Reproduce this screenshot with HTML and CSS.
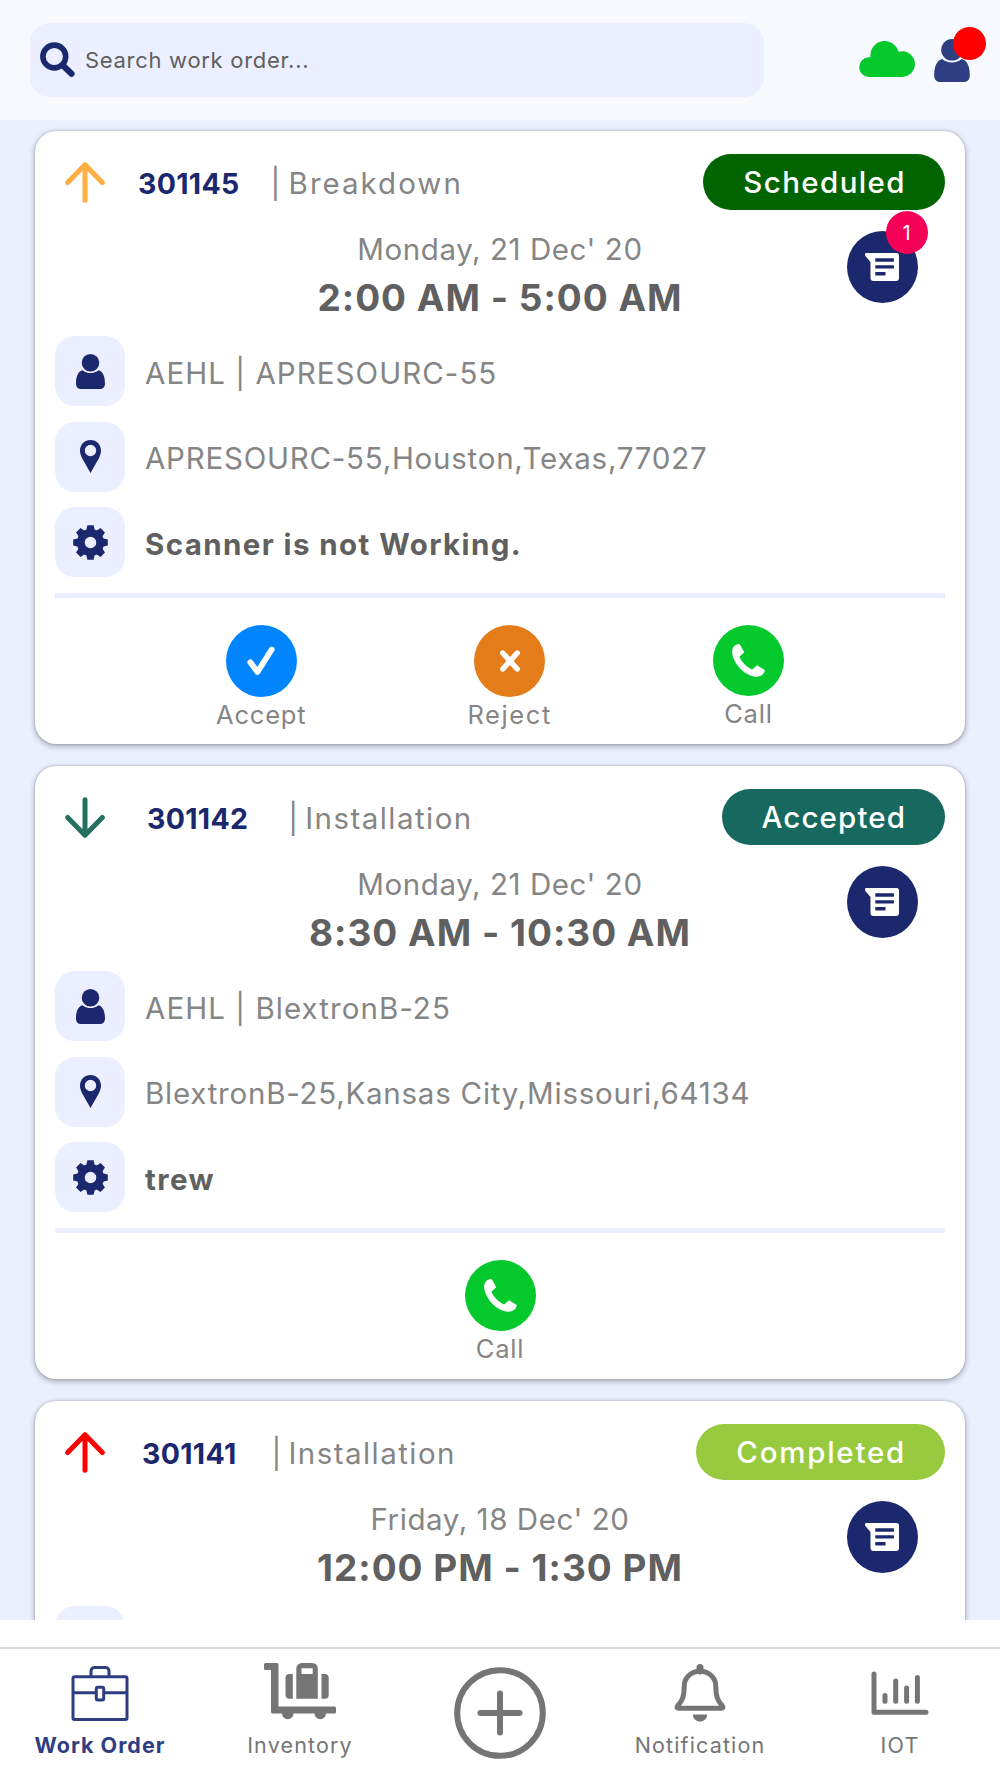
FILE: index.html
```
<!DOCTYPE html>
<html lang="en">
<head>
  <meta charset="UTF-8" />
  <meta name="viewport" content="width=device-width, initial-scale=1.0" />
  <title>Work Orders</title>
  <link rel="stylesheet" href="styles.css">
</head>
<body>

  <!-- Shared icons -->
  <svg class="sprite" aria-hidden="true">
    <symbol id="arrow-up" viewBox="0 0 40 41">
      <path d="M20 38.3V2.8M2.7 20.5L20 2.8l17.3 17.7" fill="none" stroke="currentColor" stroke-width="5" stroke-linecap="round" stroke-linejoin="round" />
    </symbol>
    <symbol id="arrow-down" viewBox="0 0 40 41">
      <path d="M20 2.7v35.5M2.7 20.5L20 38.2l17.3-17.7" fill="none" stroke="currentColor" stroke-width="5" stroke-linecap="round" stroke-linejoin="round" />
    </symbol>
    <symbol id="user" viewBox="0 0 29 35">
      <circle cx="14.5" cy="8.8" r="8.8" />
      <path d="M6.600 16.200C2 17.200 0 22.500 0 29.500C0 32.800 1.800 35 5 35h19c3.200 0 5-2.200 5-5.500c0-7-2-12.300-6.600-13.300c-2 1.800-4.800 2.900-7.900 2.900s-5.900-1.100-7.900-2.900z" />
    </symbol>
    <symbol id="pin" viewBox="0 0 21 33">
      <path fill-rule="evenodd" d="M10.500 0C4.500 0 0 4.600 0 10.600c0 2.800.8 4.900 2.100 7.600L10.500 33l8.400-14.800c1.300-2.700 2.100-4.800 2.100-7.600C21 4.600 16.500 0 10.500 0zm0 4.800a5.700 5.700 0 1 1 0 11.400a5.700 5.700 0 1 1 0-11.400z" />
    </symbol>
    <symbol id="gear" viewBox="-17.500 -17.500 35 35">
      <circle r="9.700" fill="none" stroke="currentColor" stroke-width="7.800" />
      <path id="tooth" d="M-4.300-12l1.200-5.300h6.200l1.200 5.300z" />
      <use href="#tooth" transform="rotate(45)" />
      <use href="#tooth" transform="rotate(90)" />
      <use href="#tooth" transform="rotate(135)" />
      <use href="#tooth" transform="rotate(180)" />
      <use href="#tooth" transform="rotate(225)" />
      <use href="#tooth" transform="rotate(270)" />
      <use href="#tooth" transform="rotate(315)" />
    </symbol>
    <symbol id="message" viewBox="0 0 34 28">
      <path fill-rule="evenodd" d="M1 0h30.500A2.500 2.500 0 0 1 34 2.500v22.500a3 3 0 0 1-3 3H8.500a3 3 0 0 1-3-3V9L.6 3.200C-.4 1.800-.2 0 1 0zM10.300 5.300v3.400h18.600V5.300zm0 6.900v3.400h18.600v-3.400zm0 6.900v3.400h10.200v-3.400z" />
    </symbol>
    <symbol id="phone" viewBox="0 0 33 33">
      <path d="M5.500.3C1.500 1.500-.5 5 .2 9.500C2 20.500 13 32 24 32.700c4.500.1 8.300-2.200 8.800-6.700L25 21.200l-4.800 4.300C15 23.500 9.500 18 7.400 12.800L12.200 8.200L8.300.9C7.700 0 6.500 0 5.500.3z" />
    </symbol>
  </svg>

  <header class="topbar">
    <label class="search">
      <svg width="35" height="36" viewBox="0 0 35 36">
        <circle cx="14.300" cy="14.500" r="11.400" fill="none" stroke="currentColor" stroke-width="5.600" />
        <path d="M23.500 24l8 7.800" stroke="currentColor" stroke-width="6.200" stroke-linecap="round" />
      </svg>
      <span class="search-text">Search work order...</span>
    </label>
    <svg class="cloud" width="56" height="36" viewBox="0 0 56 36">
      <path d="M10 36h33a12.900 12.900 0 1 0-3.500-25.300A14.300 14.300 0 0 0 11.500 16.300H10A9.850 9.850 0 0 0 10 36z" />
    </svg>
    <div class="profile">
      <svg width="36" height="43"><use href="#user" /></svg>
      <span class="profile-dot"></span>
    </div>
  </header>

  <main class="orders">

    <section class="card">
      <div class="card-head gap-sm">
        <svg class="priority medium"><use href="#arrow-up" /></svg>
        <span class="order-id">301145</span>
        <span class="order-type breakdown">| Breakdown</span>
        <span class="status scheduled">Scheduled</span>
      </div>
      <div class="schedule">
        <div class="when">
          <div class="date">Monday, 21 Dec' 20</div>
          <div class="time">2:00 AM - 5:00 AM</div>
        </div>
        <div class="chat">
          <svg width="34" height="28"><use href="#message" /></svg>
          <span class="count">1</span>
        </div>
      </div>
      <div class="info">
        <span class="tile"><svg width="29" height="35"><use href="#user" /></svg></span>
        <span class="code">AEHL | APRESOURC-55</span>
      </div>
      <div class="info">
        <span class="tile"><svg width="21" height="33"><use href="#pin" /></svg></span>
        <span>APRESOURC-55,Houston,Texas,77027</span>
      </div>
      <div class="info">
        <span class="tile"><svg width="35" height="35"><use href="#gear" /></svg></span>
        <span class="problem">Scanner is not Working.</span>
      </div>
      <div class="actions">
        <div class="action">
          <span class="circle accept">
            <svg class="outline" width="28" height="30" viewBox="0 0 28 30"><path d="M3.300 16.300l7.200 9.700L24.700 3.500" stroke="currentColor" stroke-width="5.800" stroke-linecap="round" stroke-linejoin="round" /></svg>
          </span>
          <span>Accept</span>
        </div>
        <div class="action">
          <span class="circle reject">
            <svg class="outline" width="20" height="22" viewBox="0 0 20 22"><path d="M2.800 3l14.400 16M17.200 3L2.800 19" stroke="currentColor" stroke-width="5.400" stroke-linecap="round" /></svg>
          </span>
          <span class="reject-label">Reject</span>
        </div>
        <div class="action">
          <span class="circle call"><svg width="33" height="33"><use href="#phone" /></svg></span>
          <span>Call</span>
        </div>
      </div>
    </section>

    <section class="card">
      <div class="card-head gap-lg">
        <svg class="priority low"><use href="#arrow-down" /></svg>
        <span class="order-id">301142</span>
        <span class="order-type">| Installation</span>
        <span class="status accepted">Accepted</span>
      </div>
      <div class="schedule">
        <div class="when">
          <div class="date">Monday, 21 Dec' 20</div>
          <div class="time">8:30 AM - 10:30 AM</div>
        </div>
        <div class="chat">
          <svg width="34" height="28"><use href="#message" /></svg>
        </div>
      </div>
      <div class="info">
        <span class="tile"><svg width="29" height="35"><use href="#user" /></svg></span>
        <span class="code">AEHL | BlextronB-25</span>
      </div>
      <div class="info">
        <span class="tile"><svg width="21" height="33"><use href="#pin" /></svg></span>
        <span>BlextronB-25,Kansas City,Missouri,64134</span>
      </div>
      <div class="info">
        <span class="tile"><svg width="35" height="35"><use href="#gear" /></svg></span>
        <span class="problem">trew</span>
      </div>
      <div class="actions">
        <div class="action">
          <span class="circle call"><svg width="33" height="33"><use href="#phone" /></svg></span>
          <span>Call</span>
        </div>
      </div>
    </section>

    <section class="card">
      <div class="card-head gap-md">
        <svg class="priority high"><use href="#arrow-up" /></svg>
        <span class="order-id">301141</span>
        <span class="order-type">| Installation</span>
        <span class="status completed">Completed</span>
      </div>
      <div class="schedule">
        <div class="when">
          <div class="date">Friday, 18 Dec' 20</div>
          <div class="time">12:00 PM - 1:30 PM</div>
        </div>
        <div class="chat">
          <svg width="34" height="28"><use href="#message" /></svg>
        </div>
      </div>
      <div class="info">
        <span class="tile"></span>
      </div>
    </section>

  </main>

  <nav class="tabs">
    <a class="tab active">
      <svg class="outline" width="58" height="60" viewBox="0 0 58 60" stroke="currentColor" stroke-width="3">
        <rect x="2" y="13.700" width="54" height="42.800" rx="1.500" />
        <path d="M20 13V8a3.500 3.500 0 0 1 3.500-3.500h11A3.500 3.500 0 0 1 38 8v5M2 29.700h23M33.500 29.700H56" />
        <rect x="25.300" y="24.200" width="7.400" height="12.800" rx="1.500" />
      </svg>
      <span>Work Order</span>
    </a>
    <a class="tab">
      <svg width="72" height="60" viewBox="0 0 72 60">
        <path d="M1.500 0H13a1.500 1.500 0 0 1 1.500 1.500V43.500h56A1.500 1.500 0 0 1 72 45v4a1.500 1.500 0 0 1-1.500 1.500H62A5.300 5.300 0 1 1 50.500 50.500H29.500A5.300 5.300 0 1 1 18 50.500h-9.500A1.500 1.500 0 0 1 7 49V7H1.500A1.500 1.500 0 0 1 0 5.500v-4A1.500 1.500 0 0 1 1.500 0z" />
        <path d="M28.800 11v24.800h-3.300a4 4 0 0 1-4-4V15a4 4 0 0 1 4-4zM57.500 11v24.800h3.200a4 4 0 0 0 4-4V15a4 4 0 0 0-4-4z" />
        <path fill-rule="evenodd" d="M32.300 35.800V5.500A5.500 5.500 0 0 1 37.800 0h10.500a5.500 5.500 0 0 1 5.500 5.500v30.300zM37.500 5.300v5.800h11.200V5.300z" />
      </svg>
      <span>Inventory</span>
    </a>
    <a class="tab add">
      <svg class="outline" width="92" height="92" viewBox="0 0 92 92" stroke="currentColor" stroke-width="6">
        <circle cx="46" cy="46" r="42.800" />
        <path d="M46 26.500v39M26.500 46h39" stroke-linecap="round" />
      </svg>
    </a>
    <a class="tab">
      <svg class="outline" width="52" height="60" viewBox="0 0 52 60">
        <path d="M26 8.200C16.500 8.200 10.200 15 10.200 23.500C10.200 34 8 38 3.600 43c-1 1.300-.6 2.200.6 2.200h43.600c1.200 0 1.600-.9.600-2.200C44 38 41.800 34 41.800 23.500C41.800 15 35.500 8.200 26 8.200z" stroke="currentColor" stroke-width="5" />
        <path d="M26 4.500V8" stroke="currentColor" stroke-width="7" stroke-linecap="round" />
        <path d="M18.700 51.400h14.600a7.300 7.300 0 0 1-14.600 0z" fill="currentColor" />
      </svg>
      <span>Notification</span>
    </a>
    <a class="tab">
      <svg class="outline" width="58" height="60" viewBox="0 0 58 60" stroke="currentColor" stroke-width="5" stroke-linecap="round" stroke-linejoin="round">
        <path d="M3 11v38.200h52" />
        <path d="M14 32.500v5.700M24.700 18v20.200M35.600 25v13.200M46.400 14.500v23.700" />
      </svg>
      <span>IOT</span>
    </a>
  </nav>

</body>
</html>
```
FILE: styles.css
```
* {
  box-sizing: border-box;
}
body {
  margin: 0;
  height: 1778px;
  overflow: hidden;
  display: flex;
  flex-direction: column;
  font-family: Inter, "Open Sans", sans-serif;
  background: #fff;
  color: #858585;
}
svg {
  display: block;
  flex-shrink: 0;
  fill: currentColor;
}
svg.outline {
  fill: none;
}
.sprite {
  position: absolute;
  width: 0;
  height: 0;
}

/* top bar */
.topbar {
  height: 120px;
  flex-shrink: 0;
  display: flex;
  align-items: center;
  padding-left: 30px;
  background: #f6faff;
}
.search {
  width: 734px;
  height: 74px;
  display: flex;
  align-items: center;
  gap: 10px;
  padding-left: 10px;
  border-radius: 20px;
  background: #ecefff;
  color: #1b286d;
}
.search-text {
  font-size: 22px;
  letter-spacing: 0.7px;
  color: #606060;
}
.cloud {
  margin: 0 19px 2px 95px;
  color: #03c92d;
}
.profile {
  position: relative;
  color: #2f3e80;
}
.profile-dot {
  position: absolute;
  top: -12px;
  right: -16px;
  width: 33px;
  height: 33px;
  border-radius: 50%;
  background: #ff0000;
}

/* work order list */
.orders {
  height: 1500px;
  flex-shrink: 0;
  overflow: hidden;
  padding: 11px 35px 0;
  background: #ebeffe;
}
.card {
  height: 613px;
  margin-bottom: 22px;
  padding: 23px 20px 0;
  border-radius: 21px;
  background: #fff;
  box-shadow: 0 2px 6px rgba(0, 0, 0, 0.32), 0 0 2px rgba(0, 0, 0, 0.25);
}
.card-head {
  height: 56px;
  display: flex;
  align-items: center;
  padding-left: 10px;
  font-size: 29.5px;
}
.gap-sm {
  gap: 33px;
}
.gap-md {
  gap: 37px;
}
.gap-lg {
  gap: 42px;
}
.priority {
  width: 40px;
  height: 41px;
}
.priority.low {
  color: #25705f;
}
.priority.medium {
  color: #ffae42;
}
.priority.high {
  color: #ff0000;
}
.order-id {
  padding-top: 3px;
  font-size: 28.5px;
  font-weight: 700;
  letter-spacing: 0.3px;
  color: #1b286d;
}
.order-type {
  margin-left: -2px;
  padding-top: 2px;
  letter-spacing: 1.45px;
  word-spacing: -4px;
}
.order-type.breakdown {
  letter-spacing: 2px;
}
.status {
  height: 56px;
  line-height: 57px;
  margin-left: auto;
  padding: 0 39px 0 40px;
  border-radius: 28px;
  font-weight: 500;
  letter-spacing: 1.4px;
  color: #fff;
}
.scheduled {
  background: #006400;
}
.accepted {
  letter-spacing: 1.1px;
  background: #17695f;
}
.completed {
  letter-spacing: 1.75px;
  background: #97ca3f;
}

.schedule {
  display: grid;
  grid-template-columns: 1fr auto 1fr;
  height: 98px;
  margin: 16px 0 12px;
}
.when {
  grid-column: 2;
  text-align: center;
}
.date {
  font-size: 29.5px;
  line-height: 47px;
  letter-spacing: 0.57px;
}
.time {
  font-size: 37px;
  font-weight: 700;
  line-height: 49px;
  letter-spacing: 1px;
  color: #606060;
}
.chat {
  position: relative;
  justify-self: end;
  display: flex;
  align-items: center;
  justify-content: center;
  width: 71px;
  height: 72px;
  margin: 4.5px 27.500px 0 0;
  border-radius: 50%;
  background: #1b286d;
  color: #fff;
}
.count {
  position: absolute;
  top: -20px;
  right: -10px;
  width: 42px;
  height: 43px;
  line-height: 44px;
  border-radius: 50%;
  background: #f50057;
  font-size: 20px;
  text-align: center;
}

.info {
  height: 70px;
  margin-bottom: 15.5px;
  display: flex;
  align-items: center;
  gap: 20px;
  font-size: 29.5px;
  line-height: 1;
  letter-spacing: 0.76px;
}
.info span + span {
  padding-top: 5px;
}
.info .code {
  letter-spacing: 1.05px;
}
.info .problem {
  font-weight: 700;
  letter-spacing: 1.4px;
  color: #606060;
}
.tile {
  width: 70px;
  height: 70px;
  flex-shrink: 0;
  display: flex;
  align-items: center;
  justify-content: center;
  border-radius: 20px;
  background: #ecefff;
  color: #1b286d;
}

.actions {
  display: flex;
  justify-content: space-evenly;
  padding-top: 27.5px;
  border-top: 5px solid #ecefff;
}
.action {
  display: flex;
  flex-direction: column;
  align-items: center;
  gap: 3px;
  font-size: 25.5px;
  line-height: 30px;
  letter-spacing: 0.8px;
}
.reject-label {
  letter-spacing: 1.6px;
}
.circle {
  width: 71px;
  height: 72px;
  display: flex;
  align-items: center;
  justify-content: center;
  border-radius: 50%;
  color: #fff;
}
.accept {
  background: #0085ff;
}
.reject {
  background: #e57c1a;
}
.call {
  height: 71px;
  background: #03c92d;
}

/* bottom tabs */
.tabs {
  display: flex;
  height: 131px;
  flex-shrink: 0;
  margin-top: 27px;
  padding-top: 14px;
  border-top: 2px solid #d9d9d9;
}
.tab {
  flex: 1;
  display: flex;
  flex-direction: column;
  align-items: center;
  gap: 7px;
  font-size: 21.5px;
  line-height: 30px;
  letter-spacing: 1.15px;
  color: #757575;
}
.tab.active {
  font-weight: 700;
  letter-spacing: 1px;
  color: #2f3e80;
}
.tab.add {
  padding-top: 4px;
}
```
